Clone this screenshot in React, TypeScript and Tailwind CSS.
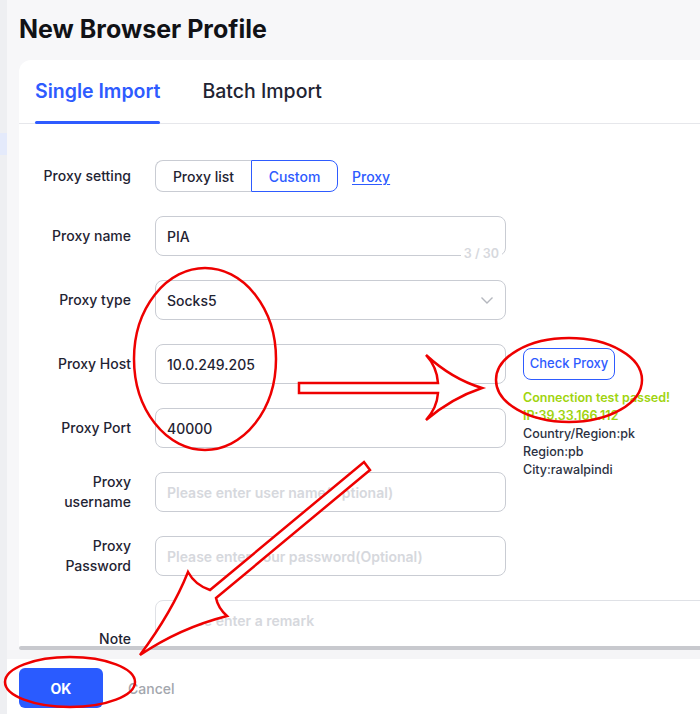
import React from 'react';

const blue = 'text-[#2e5bff]';

function Label({ children, className = '' }: { children: React.ReactNode; className?: string }) {
  return (
    <div className={`pr-[24px] text-right text-[14px] leading-[20px] font-medium text-[#1f2433] ${className}`}>
      {children}
    </div>
  );
}

function TextInput({ value, placeholder }: { value?: string; placeholder?: string }) {
  return (
    <div className="flex h-[40px] w-[351px] items-center rounded-[8px] border border-[#c9ccd3] bg-white pl-[11px] text-[14px] font-medium">
      {value ? (
        <span className="text-[#1f2433]">{value}</span>
      ) : (
        <span className="whitespace-nowrap font-semibold text-[#d6d8dd]">{placeholder}</span>
      )}
    </div>
  );
}

function Annotations() {
  return (
    <svg
      className="pointer-events-none absolute left-0 top-0"
      width="700"
      height="714"
      viewBox="0 0 700 714"
    >
      <g fill="none" stroke="#ee0000" strokeWidth="2.5">
        <ellipse cx="205" cy="359" rx="71" ry="91" />
        <ellipse cx="569" cy="380" rx="73" ry="42" />
        <ellipse cx="70" cy="682" rx="65" ry="25" />
      </g>
      <g fill="#ffffff" stroke="#ee0000" strokeWidth="2.5" strokeLinejoin="miter">
        <path d="M 299 383 L 438 383 Q 437 367 426 355 Q 452 379 482 388 Q 452 398 426 420 Q 437 408 438 393 L 299 393 Z" />
        <path d="M 370 470 L 216 598 Q 218 608 227 616 Q 180 628 140 655 Q 172 612 188 572 Q 195 585 210 590 L 364 462 Z" />
      </g>
    </svg>
  );
}

export default function App() {
  return (
    <div className="relative flex h-[714px] w-[700px] overflow-hidden bg-[#eeeff2] font-[Inter,sans-serif]">
      <div className="flex w-[7px] shrink-0 flex-col">
        <div className="h-[133px]" />
        <div className="h-[22px] bg-[#e4eafb]" />
      </div>

      <div className="flex min-w-0 flex-1 flex-col bg-[#f7f7f9]">
        <h1 className="flex h-[60px] items-center pl-[12px] text-[25px] font-bold text-[#111216]">
          New Browser Profile
        </h1>

        <div className="ml-[12px] flex h-[590px] flex-col overflow-hidden rounded-tl-[12px] bg-white">
          <div className="flex h-[64px] shrink-0 items-stretch gap-[42px] border-b border-[#e6e7eb] pl-[16px]">
            <div className={`relative flex items-center text-[19.5px] font-semibold ${blue}`}>
              Single Import
              <div className="absolute bottom-[-1px] left-0 right-0 h-[3px] rounded-full bg-[#2e5bff]" />
            </div>
            <div className="flex items-center text-[19.5px] font-medium text-[#1f2433]">Batch Import</div>
          </div>

          <div className="min-h-0 flex-1 overflow-hidden pt-[36px]">
            <div className="grid grid-cols-[136px_368px_1fr] items-center gap-y-[24px]">
              <Label>Proxy setting</Label>
              <div className="col-span-2 flex h-[32px] items-center">
                <div className="flex h-[32px] w-[96px] items-center justify-center rounded-l-[8px] border border-r-0 border-[#c9ccd3] text-[14px] font-medium text-[#1f2433]">
                  Proxy list
                </div>
                <div className={`flex h-[32px] w-[87px] items-center justify-center rounded-r-[8px] border border-[#2e5bff] text-[14px] font-medium ${blue}`}>
                  Custom
                </div>
                <a className={`ml-[14px] text-[14px] font-medium underline underline-offset-2 ${blue}`}>Proxy</a>
              </div>

              <Label>Proxy name</Label>
              <div className="relative col-span-2 w-[351px]">
                <TextInput value="PIA" />
                <span className="absolute bottom-[-8px] right-[4px] bg-white px-[3px] text-[12.5px] font-semibold text-[#d6d8dd]">
                  3 / 30
                </span>
              </div>

              <Label>Proxy type</Label>
              <div className="col-span-2 flex h-[40px] w-[351px] items-center justify-between rounded-[8px] border border-[#c9ccd3] pl-[11px] pr-[12px] text-[14px] font-medium text-[#1f2433]">
                Socks5
                <svg width="12" height="7" viewBox="0 0 12 7" fill="none" stroke="#b4b7be" strokeWidth="1.4">
                  <path d="M 0.5 0.5 L 6 6 L 11.5 0.5" />
                </svg>
              </div>

              <Label>Proxy Host</Label>
              <TextInput value="10.0.249.205" />
              <div className="row-span-3 self-start pt-[4px]">
                <div className={`flex h-[32px] w-[92px] items-center justify-center rounded-[8px] border border-[#2e5bff] text-[13px] font-medium ${blue}`}>
                  Check Proxy
                </div>
                <div className="mt-[9px] text-[12.5px] leading-[18px] font-medium">
                  <div className="font-semibold text-[#a0d40e]">Connection test passed!</div>
                  <div className="font-semibold text-[#a0d40e]">IP:39.33.166.112</div>
                  <div className="text-[#2c3142]">Country/Region:pk</div>
                  <div className="text-[#2c3142]">Region:pb</div>
                  <div className="text-[#2c3142]">City:rawalpindi</div>
                </div>
              </div>

              <Label>Proxy Port</Label>
              <TextInput value="40000" />

              <Label>
                Proxy
                <br />
                username
              </Label>
              <TextInput placeholder="Please enter user name(Optional)" />

              <Label>
                Proxy
                <br />
                Password
              </Label>
              <div className="col-span-2">
                <TextInput placeholder="Please enter your password(Optional)" />
              </div>

              <Label className="mb-[5px]">Note</Label>
              <div className="col-span-2 h-[82px] w-[600px] rounded-[8px] border border-[#dfe1e6] pl-[11px] pt-[9px] text-[14px] font-semibold text-[#d6d8dd]">
                Please enter a remark
              </div>
            </div>
          </div>

          <div className="h-[4px] shrink-0 rounded-l-full bg-[#c8c9ce]" />
        </div>

        <div className="h-[9px] bg-[#f5f5f7]" />

        <div className="flex flex-1 items-start bg-white pl-[12px] pt-[9px]">
          <button className="flex h-[40px] w-[84px] items-center justify-center rounded-[6px] bg-[#2a5bff] text-[14px] font-bold text-white">
            OK
          </button>
          <span className="ml-[25px] mt-[10px] text-[14px] font-medium text-[#a3a6ad]">Cancel</span>
        </div>
      </div>

      <Annotations />
    </div>
  );
}
